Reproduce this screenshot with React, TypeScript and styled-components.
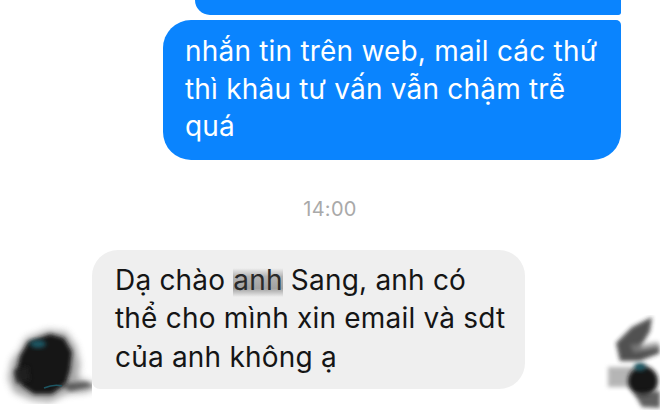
import React from 'react'
import styled, { createGlobalStyle } from 'styled-components'

const GlobalStyle = createGlobalStyle`
  html, body {
    margin: 0;
    padding: 0;
    background: #ffffff;
  }
  body {
    font-family: Inter, "Liberation Sans", Arial, sans-serif;
    -webkit-font-smoothing: antialiased;
  }
`

const Screen = styled.div`
  width: 660px;
  height: 419px;
  overflow: hidden;
  display: flex;
  flex-direction: column;
  background: #fff;
`

const SentBubble = styled.div<{ $width: number; $tail?: boolean }>`
  align-self: flex-end;
  box-sizing: border-box;
  width: ${(p) => p.$width}px;
  margin-right: 39px;
  background: #0a84fe;
  color: #fff;
  font-size: 28px;
  line-height: 37.5px;
  letter-spacing: 0.2px;
  border-radius: ${(p) => (p.$tail ? '28px 5px 28px 28px' : '0 0 5px 28px')};
  padding: ${(p) => (p.$tail ? '13px 20px 14px 22px' : '0')};
`

const FirstBubble = styled(SentBubble)`
  height: 15px;
`

const SecondBubble = styled(SentBubble)`
  margin-top: 5px;
`

const Timestamp = styled.div`
  margin-top: 37px;
  text-align: center;
  color: #a9a9a9;
  font-size: 20px;
  line-height: 24px;
  letter-spacing: 0.3px;
`

const ReceivedRow = styled.div`
  margin-top: 29px;
  display: flex;
  align-items: flex-end;
`

const Avatar = styled.svg<{ $drop: number }>`
  flex: none;
  display: block;
  margin-bottom: -${(p) => p.$drop}px;
`

const ReceivedBubble = styled.div`
  box-sizing: border-box;
  width: 433px;
  background: #efefef;
  color: #151515;
  font-size: 28px;
  line-height: 38.5px;
  letter-spacing: 0.2px;
  border-radius: 26px 26px 26px 8px;
  padding: 11px 16px 13px 23px;
`

const Redacted = styled.span`
  color: #2a2a2a;
  background: linear-gradient(180deg, rgba(150,150,150,0) 15%, rgba(120,120,120,0.5) 40%, rgba(110,110,110,0.6) 75%, rgba(150,150,150,0) 100%);
`

const Spacer = styled.div`
  flex: 1;
`

function LeftAvatar() {
  return (
    <Avatar $drop={15} width="92" height="82" viewBox="0 0 92 82">
      <defs>
        <filter id="blurL" x="-30%" y="-30%" width="160%" height="160%">
          <feGaussianBlur stdDeviation="2" />
        </filter>
        <filter id="blurL2" x="-30%" y="-30%" width="160%" height="160%">
          <feGaussianBlur stdDeviation="3.5" />
        </filter>
      </defs>
      <path
        d="M26 16 L48 8 L66 10 L76 24 L80 42 L78 56 L90 60 L98 64 L88 70 L66 72 L50 80 L32 78 L14 70 L8 56 L12 38 L20 28 Z"
        fill="#6a6a6a"
        opacity="0.6"
        filter="url(#blurL2)"
      />
      <path
        d="M28 20 L50 12 L64 16 L72 30 L70 48 L66 62 L52 72 L34 72 L22 64 L16 52 L20 34 Z"
        fill="#121212"
        filter="url(#blurL)"
      />
      <path d="M14 48 L28 44 L30 58 L16 62 Z" fill="#222" opacity="0.8" filter="url(#blurL)" />
      <path d="M60 62 L86 60 L94 64 L70 69 Z" fill="#3a3a3a" opacity="0.7" filter="url(#blurL)" />
      <ellipse cx="38" cy="22" rx="8" ry="4" fill="#1d5663" filter="url(#blurL)" />
      <path d="M44 66 Q54 62 62 64" stroke="#1d5663" strokeWidth="1.5" fill="none" />
    </Avatar>
  )
}

function RightAvatar() {
  return (
    <Avatar $drop={21} width="60" height="95" viewBox="0 0 60 95">
      <defs>
        <filter id="blurR" x="-30%" y="-30%" width="160%" height="160%">
          <feGaussianBlur stdDeviation="2" />
        </filter>
      </defs>
      <path
        d="M20 46 L16 28 L32 12 L52 2 L50 16 L40 33 L58 30 L60 38 L40 46 Z"
        fill="#262626"
        opacity="0.8"
        filter="url(#blurR)"
      />
      <path d="M30 30 L58 26 L60 34 L34 38 Z" fill="#999" opacity="0.5" filter="url(#blurR)" />
      <rect x="8" y="52" width="26" height="20" fill="#7a7a7a" opacity="0.55" filter="url(#blurR)" />
      <circle cx="43" cy="66" r="15" fill="#161616" filter="url(#blurR)" />
      <path d="M34 78 L60 76 L60 93 L42 92 Z" fill="#383838" opacity="0.8" filter="url(#blurR)" />
      <ellipse cx="40" cy="52" rx="6" ry="4" fill="#1d5663" filter="url(#blurR)" />
    </Avatar>
  )
}

export default function App() {
  return (
    <>
      <GlobalStyle />
      <Screen>
        <FirstBubble $width={426} />
        <SecondBubble $width={458} $tail>
          nhắn tin trên web, mail các thứ thì khâu tư vấn vẫn chậm trễ quá
        </SecondBubble>
        <Timestamp>14:00</Timestamp>
        <ReceivedRow>
          <LeftAvatar />
          <ReceivedBubble>
            Dạ chào <Redacted>anh</Redacted> Sang, anh có
            <br />
            thể cho mình xin email và sdt
            <br />
            của anh không ạ
          </ReceivedBubble>
          <Spacer />
          <RightAvatar />
        </ReceivedRow>
      </Screen>
    </>
  )
}
